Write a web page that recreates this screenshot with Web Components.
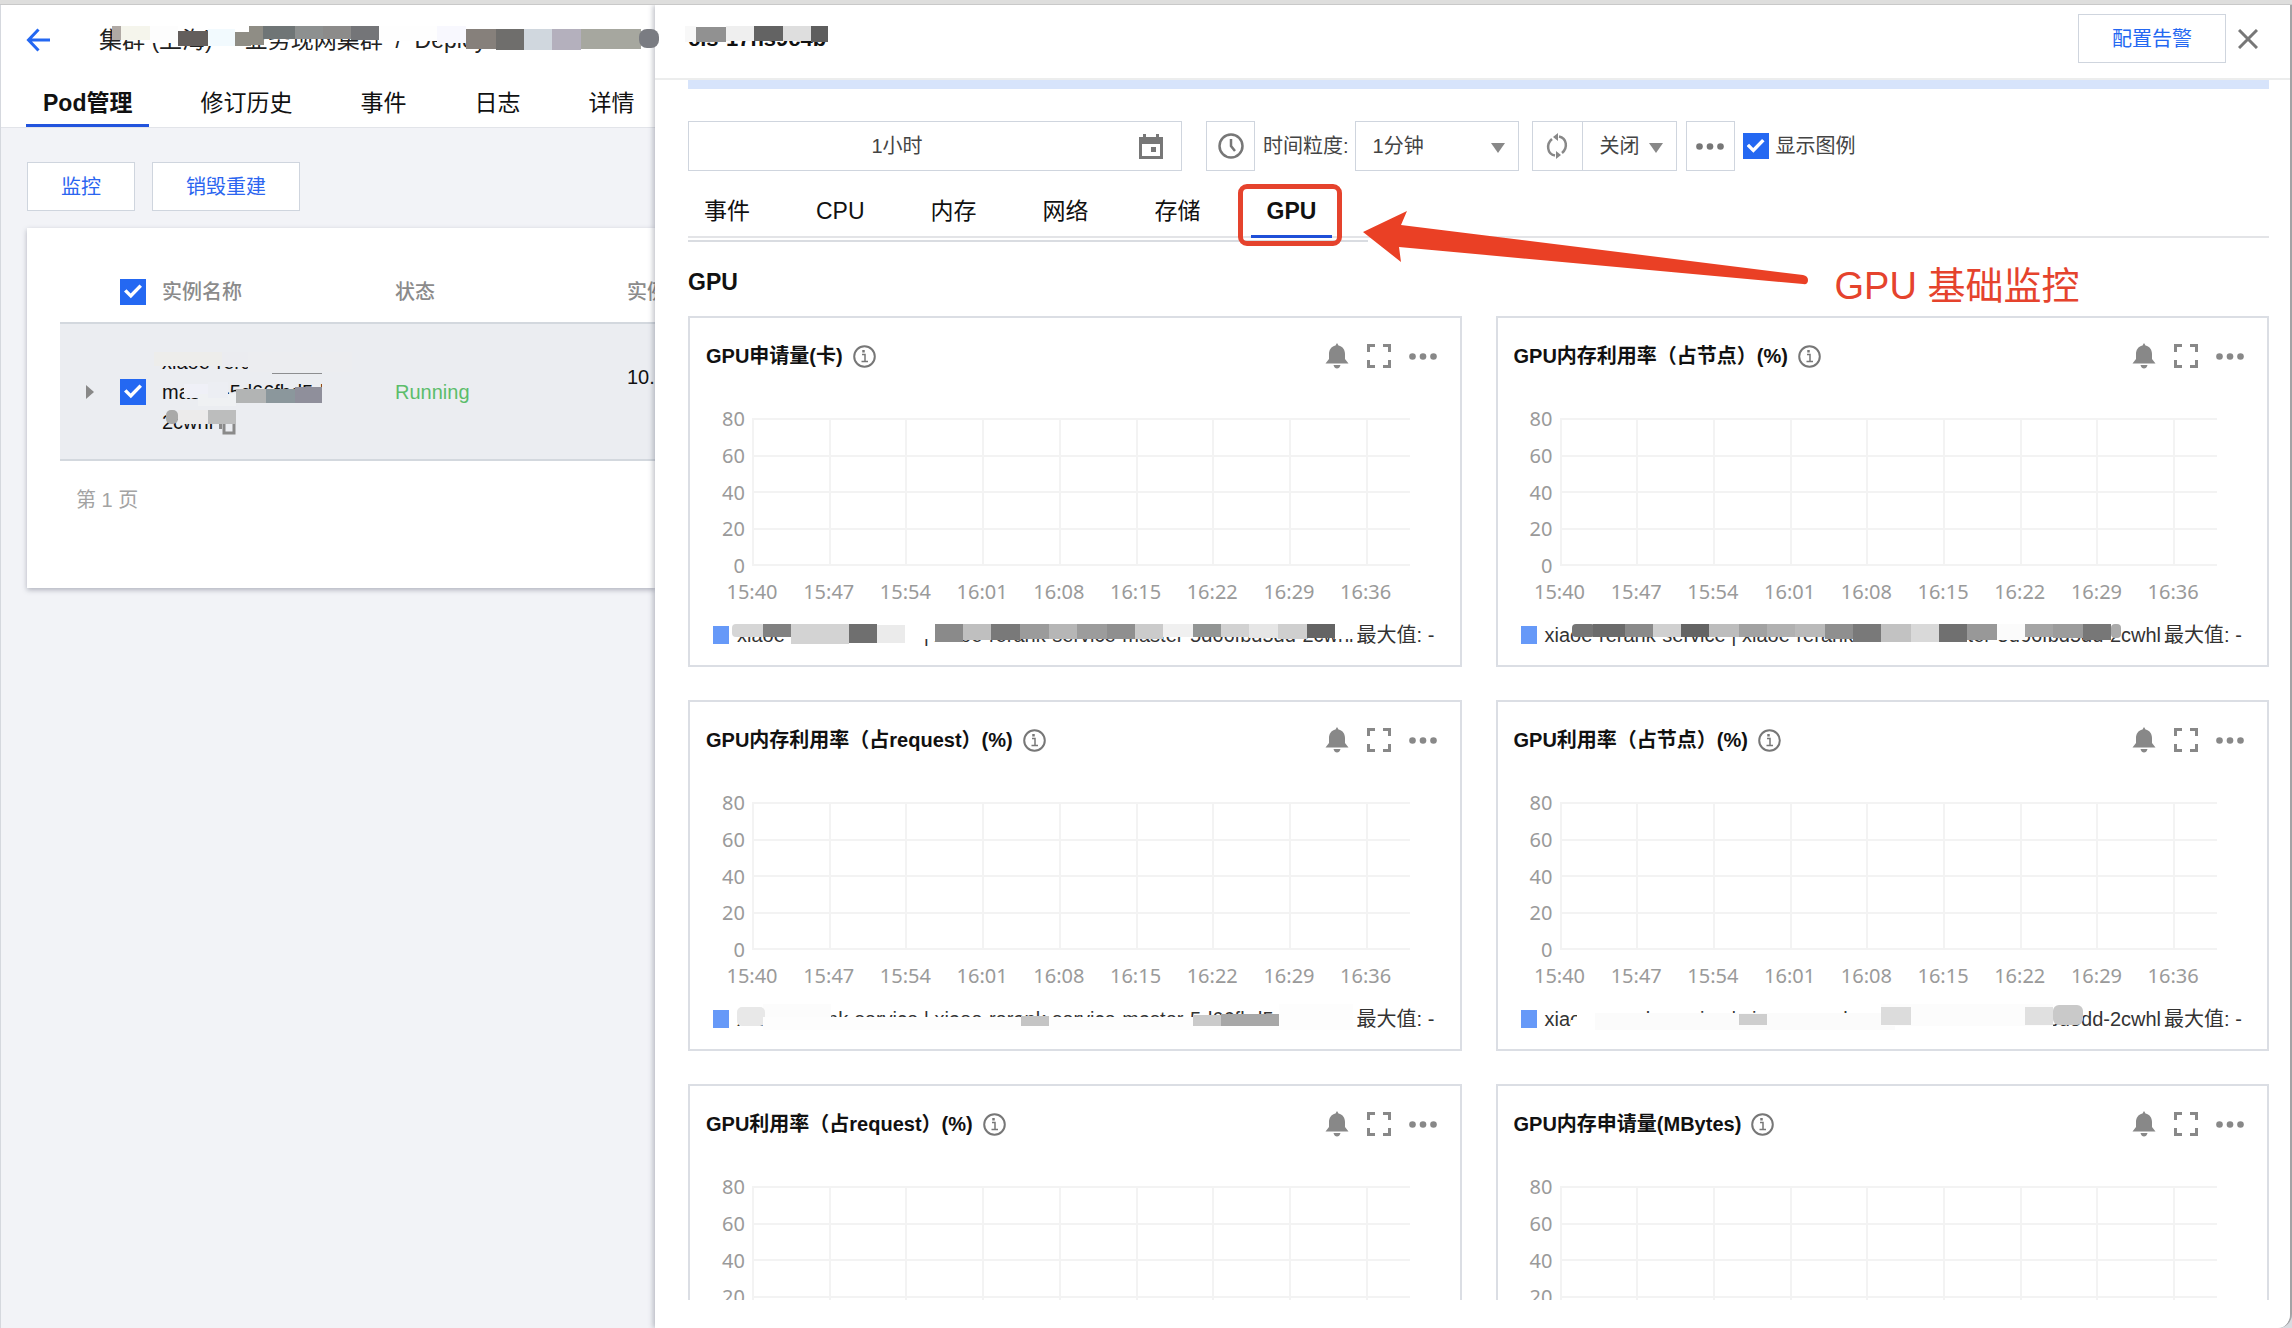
<!DOCTYPE html>
<html lang="zh-CN">
<head>
<meta charset="utf-8">
<title>Pod管理 - GPU 监控</title>
<style>
html,body{height:100%}
body{margin:0;background:#fff;color:#111;overflow:hidden;font:20px/30px "Liberation Sans","Noto Sans CJK SC",sans-serif}
</style>
</head>
<body>
<console-window>
  <workload-page slot="page"></workload-page>
  <monitor-drawer slot="drawer"></monitor-drawer>
</console-window>

<script>
const base = `
*{box-sizing:border-box}
button,input,select{font:inherit;color:inherit;margin:0;border-radius:0}
button{background:none;border:0;padding:0;cursor:pointer}
a{color:inherit;text-decoration:none}
svg{display:block}
.mask{position:absolute;left:0;top:0;width:1px;height:1px;overflow:visible;pointer-events:none}
.check{appearance:none;width:26px;height:26px;background:#2468f2;display:grid;place-items:center;flex:none}
.check::before{content:"";width:18px;height:16px;background:#fff;clip-path:polygon(0 50%,14% 36%,37% 62%,86% 6%,100% 20%,38% 92%)}
`;
function define(name, css, html, setup){
  customElements.define(name, class extends HTMLElement{
    connectedCallback(){
      if(this.shadowRoot) return;
      const root = this.attachShadow({mode:'open'});
      root.innerHTML = '<style>' + base + css + '</style>' + (typeof html === 'function' ? html(this) : html);
      if(setup) setup(root, this);
    }
  });
}
/* Redaction blocks: "left,top,right,bottom,colour" joined by spaces. */
function blocks(list){
  return '<svg class="mask" aria-hidden="true">' + list.trim().split(/\s+/).map(s => {
    const [l,t,r,b,c,q] = s.split(',');
    return `<rect x="${l}" y="${t}" width="${r-l}" height="${b-t}" fill="${c}" rx="${q||0}"/>`;
  }).join('') + '</svg>';
}

define('console-window', `
:host{display:flex;flex-direction:column;height:100vh;background:#d9dbe0}
.bar{height:5px;background:#dededd;border-bottom:1px solid #c9c9c9;flex:none}
.main{flex:1;min-height:0;display:grid;grid-template-columns:minmax(0,2fr) minmax(0,5fr);border-left:1px solid #d5d8de;border-right:2px solid #a3a3a5;border-radius:0 0 14px 0;overflow:hidden;background:#f2f3f7}
`, `<div class="bar"></div><div class="main"><slot name="page"></slot><slot name="drawer"></slot></div>`);

define('workload-page', `
:host{display:block;min-width:0}
header{background:#fff;border-bottom:1px solid #e2e4e9;height:123px;display:flex;flex-direction:column;justify-content:space-between;position:static}
.crumb{display:flex;align-items:center;gap:49px;padding:18px 0 0 25px;height:52px;font-size:23px;position:relative}
.crumb nav{white-space:pre;color:#222}
.crumb .mask{z-index:3}
.tabs{display:flex;gap:34px;padding-left:25px;font-size:23px;white-space:nowrap;overflow:hidden}
.tabs a{padding:0 17px;height:50px;line-height:52px;border-bottom:3px solid transparent}
.tabs a.on{font-weight:bold;border-color:#2254dd}
.body{padding:34px 0 40px 26px;overflow:hidden}
.acts{display:flex;gap:17px}
.acts button{height:49px;padding:0 33px;border:1px solid #cfd5de;background:#fff;color:#2b65f0}
.card{margin-top:17px;background:#fff;height:360px;padding:33px 0 0 33px;box-shadow:0 2px 5px rgba(54,58,80,.35);white-space:nowrap}
table{border-collapse:collapse;table-layout:fixed;width:900px}
th,td{padding:0;text-align:left;font-weight:normal}
th{height:62px;color:#8b8b8b;font-weight:500}
tr.sel td{height:137px;background:#ebedf1;border-top:2px solid #d3d8de;border-bottom:2px solid #d3d8de}
.tri{width:0;height:0;border:7px solid transparent;border-left:8px solid #888;border-right:0;margin-left:26px}
.name{position:relative}
.name svg.copy{display:inline-block;vertical-align:-6px}
.run{color:#5bbd6b}
.ip{line-height:30px}
.page{padding:24px 16px;color:#a3a3a3}
`, `
<header>
  <div class="crumb">
    <a href="#" aria-label="返回"><svg width="24" height="24" viewBox="0 0 24 24" fill="none" stroke="#2468f2" stroke-width="3"><path d="M24 12H3M12.500 1.500L2.500 12l10 10.500"/></svg></a>
    <nav>集群 (上海)     业务现网集群  /  Deployment:xiaoe</nav>
    ${blocks(`111,21,120,35,#b0a9a4 120,21,149,35,#f5f5ec 149,21,177,38,#fdfdfd 177,26,207,41,#635e5c 207,24,234,41,#f2fafe 234,27,250,41,#8f8d85 248,21,263,40,#8f8d85 262,21,294,34,#6f7576 294,21,322,34,#8d9090 322,21,350,34,#8c8b8a 350,21,378,35,#747578 378,21,436,36,#fefefe 436,21,465,38,#f8f8fe 465,24,495,44,#86807b 495,24,523,45,#6f6e6c 523,24,551,45,#d0d7de 551,24,580,45,#b4b0bd 580,24,640,44,#a6a79f 638,24,658,43,#7a7c82,8`)}
  </div>
  <div class="tabs"><a class="on" href="#">Pod管理</a><a href="#">修订历史</a><a href="#">事件</a><a href="#">日志</a><a href="#">详情</a></div>
</header>
<div class="body">
  <div class="acts"><button>监控</button><button>销毁重建</button></div>
  <div class="card">
    <table>
      <colgroup><col style="width:60px"><col style="width:42px"><col style="width:233px"><col style="width:232px"><col></colgroup>
      <thead><tr><th></th><th><input class="check" type="checkbox" checked aria-label="全选"></th><th>实例名称</th><th>状态</th><th>实例</th></tr></thead>
      <tbody><tr class="sel">
        <td><div class="tri"></div></td>
        <td><input class="check" type="checkbox" checked aria-label="选择实例"></td>
        <td class="name">xiaoe-rerank-service-<br>master-5d66fbd5dd-<br>2cwhl <svg class="copy" width="17" height="22" viewBox="0 0 17 22" fill="none" stroke="#8a8a8a" stroke-width="3"><path d="M1.500 16V2H10M5 7h10v13H5z"/></svg>
        ${blocks(`-8,28,60,42,#ededeb 60,28,86,43,#ebecf0 86,28,190,48,#ecedf0 110,49,160,50,#8d8e90 22,60,46,74,#eff0f7 36,70,74,82,#eff1f3 46,58,66,74,#eceef3 74,65,104,79,#b2b4b4 104,65,133,79,#8b979c 133,63,160,79,#8f8f9b 160,56,186,80,#ebedf1 4,86,16,100,#a9a9a8,5 16,86,46,100,#ecebeb 46,86,74,100,#bcbdbd`)}</td>
        <td class="run">Running</td>
        <td class="ip">10.<br>&nbsp;</td>
      </tr></tbody>
    </table>
    <div class="page">第 1 页</div>
  </div>
</div>`);

define('gpu-tabs', `
:host{display:block;margin-top:15px}
.row{display:flex;gap:34px;font-size:23px;border-bottom:2px solid #e3e4e7;height:52px;position:relative}
.row::after{content:"";position:absolute;left:0;top:54px;width:680px;height:2px;background:#d9dce1}
a{position:relative;padding:0 16px;line-height:51px;height:52px;border-bottom:3px solid transparent;white-space:nowrap}
a.on{font-weight:bold;border-color:#1f4fd8}
.ring{position:absolute;left:-13px;right:-10px;top:-2px;height:62px;border:5px solid #e5432d;border-radius:9px;z-index:2}
.arrow{position:absolute;left:112px;top:20px;z-index:2}
.note{position:absolute;left:584px;top:72px;font-size:38px;line-height:56px;font-weight:normal;color:#e5432d;z-index:2}
`, `
<div class="row"><a href="#">事件</a><a href="#">CPU</a><a href="#">内存</a><a href="#">网络</a><a href="#">存储</a>
<a class="on" href="#">GPU<span class="ring"></span>
<svg class="arrow" width="450" height="80" viewBox="0 0 450 80" fill="#ea4025"><path d="M0 26L44 5L38 19L440 69Q445 70 445 74Q445 79 440 78L36 41L38 56Z"/></svg>
<span class="note">GPU 基础监控</span></a></div>`);

define('monitor-drawer', `
:host{display:flex;flex-direction:column;min-width:0;min-height:0;background:#fff;position:relative;z-index:1;box-shadow:-2px 0 5px rgba(54,58,80,.3)}
header{height:75px;flex:none;display:flex;align-items:center;padding:0 32px 6px 33px;border-bottom:2px solid #eceded;position:relative}
h1{font-size:22px;line-height:30px;margin:0;flex:1}
header .alarm{width:148px;height:49px;border:1px solid #cfd5de;color:#2468f2;margin-right:12px}
.body{flex:1;min-height:0;overflow:hidden;margin:0 21px 28px 33px}
.banner{height:9px;background:#d7e4fb}
.tools{display:flex;align-items:center;margin-top:32px;height:50px;color:#444;white-space:nowrap}
.box{height:50px;border:1px solid #cfd5de;display:flex;align-items:center;justify-content:center;background:#fff}
.date{width:494px;margin-right:24px}
.date input{flex:1;min-width:0;border:0;text-align:center;padding:0 0 0 12px;outline:0}
.date button{margin:0 18px 0 46px}
.clock,.more{width:49px}
.clock{margin-right:8px}
.sel{position:relative;margin-left:6px;width:164px}
select{appearance:none;background:none;border:0;width:100%;height:100%;padding:0 17px;outline:0}
.caret{position:absolute;right:13px;top:21px;border:7px solid transparent;border-top:10px solid #888;border-bottom:0;pointer-events:none}
.group{display:flex;margin-left:13px;margin-right:9px}
.group .box{width:51px}
.group .sel{margin-left:-1px;width:95px}
.show{display:flex;align-items:center;gap:7px;margin-left:8px}
h2{font-size:23px;line-height:30px;margin:29px 0 19px}
.grid{display:grid;grid-template-columns:1fr 1fr;gap:33px 34px}
`, `
<header><h1>cls-17ns9c4b</h1><button class="alarm">配置告警</button>
<button aria-label="关闭"><svg width="20" height="20" viewBox="0 0 20 20" stroke="#777" stroke-width="3"><path d="M1 1L19 19M19 1L1 19"/></svg></button>
${blocks(`30,21,41,37,#f8f8f8 41,22,71,37,#919191 71,21,99,36,#efefef 99,21,128,36,#636363 128,21,156,36,#dedede 156,21,173,37,#5e5e5e`)}
</header>
<div class="body">
  <div class="banner"></div>
  <div class="tools">
    <div class="box date"><input type="text" value="1小时" readonly aria-label="时间范围"><button aria-label="选择日期"><svg width="24" height="25" viewBox="0 0 24 25"><path fill="#777" fill-rule="evenodd" d="M4 0h3v3h10V0h3v3h4v22H0V3h4zM3 10v12h18V10zM12 13h5v5h-5z"/></svg></button></div>
    <button class="box clock" aria-label="时间"><svg width="26" height="26" viewBox="0 0 26 26" fill="none" stroke="#777" stroke-width="2.500"><circle cx="13" cy="13" r="11.500"/><path d="M13 6v7l4 5"/></svg></button>
    <label for="gran">时间粒度:</label>
    <div class="box sel"><select id="gran"><option>1分钟</option></select><i class="caret"></i></div>
    <div class="group"><button class="box" aria-label="刷新"><svg width="22" height="26" viewBox="0 0 22 26" fill="none" stroke="#888" stroke-width="2.500"><path d="M9 22.500C1 21 0 11 6 6M13 3.500C21 5 22 15 16 20"/><path fill="#888" stroke="none" d="M12 0v8L7 4zM10 18v8l5-4z"/></svg></button>
    <div class="box sel"><select aria-label="自动刷新"><option>关闭</option></select><i class="caret"></i></div></div>
    <button class="box more" aria-label="更多"><svg width="28" height="7" viewBox="0 0 28 7" fill="#777"><circle cx="3.500" cy="3.500" r="3.300"/><circle cx="14" cy="3.500" r="3.300"/><circle cx="24.500" cy="3.500" r="3.300"/></svg></button>
    <label class="show"><input class="check" type="checkbox" checked>显示图例</label>
  </div>
  <gpu-tabs></gpu-tabs>
  <h2>GPU</h2>
  <div class="grid">
    <metric-card data-mask="a">GPU申请量(卡)</metric-card>
    <metric-card data-mask="b">GPU内存利用率（占节点）(%)</metric-card>
    <metric-card data-mask="c">GPU内存利用率（占request）(%)</metric-card>
    <metric-card data-mask="d">GPU利用率（占节点）(%)</metric-card>
    <metric-card>GPU利用率（占request）(%)</metric-card>
    <metric-card>GPU内存申请量(MBytes)</metric-card>
  </div>
</div>`);

/* Redactions over the series names, measured from the legend row. */
const masks = {
  a:`19,4,52,17,#d6d6d6,4 50,4,78,17,#818181 78,4,136,24,#d3d3d3 136,4,164,23,#6f6f6f 164,5,192,23,#ebebeb 192,0,208,26,#fff 208,0,222,19,#fff 222,4,250,22,#8a8a8a 250,4,278,20,#bfbfbf 278,4,307,20,#797979 307,4,336,19,#9b9b9b 336,4,364,19,#b6b6b6 364,4,394,19,#9c9c9c 394,4,422,19,#8f8f8f 422,4,450,19,#cbcbcb 450,4,480,17,#f0f0f0 480,4,508,17,#929594 508,4,536,17,#d2d2d2 536,4,565,18,#e6e6e6 565,4,594,19,#cfcfcf 594,4,622,18,#646464 622,0,640,19,#fff`,
  b:`51,4,74,17,#757575,4 72,4,104,17,#6b6b6b 104,4,132,17,#8a8a8a 132,4,160,17,#d0d0d0 160,4,188,17,#646464 188,4,218,17,#bdbdbd 218,4,246,17,#a2a2a2 246,4,274,17,#b1b1b1 274,4,304,17,#bababa 304,4,332,19,#8f8f8f 332,4,360,22,#797979 360,4,390,22,#c2c2c2 390,4,418,22,#d9d9d9 418,4,446,22,#707070 446,4,476,20,#989898 476,4,504,20,#fbfbfb 504,4,532,17,#a5a5a5 532,4,562,18,#9c9c9c 562,4,590,20,#777 590,4,600,18,#aaa,4`,
  c:`50,0,118,22,#fcfcfc 24,3,52,22,#e8e8e8,5 50,13,566,26,#fdfdfd 308,12,336,22,#c4c4c4 480,11,508,22,#cacaca 508,10,566,22,#a7a7a7 566,0,640,26,#fdfdfd`,
  d:`50,16,58,24,#fff 56,0,74,24,#fff 74,0,374,7,#fff 74,9,374,26,#fbfbfb 218,10,246,21,#cecece 360,0,532,22,#fcfcfc 360,3,390,21,#dcdcdc 504,3,532,21,#e0e0e0 532,1,562,21,#c9c9c9,6`
};
define('metric-card', `
:host{display:block;border:2px solid #dbdee4;height:351px;min-width:0}
.head{display:flex;align-items:center;height:36px;margin:20px 23px 0 16px;white-space:nowrap}
h3{font-size:20px;line-height:30px;margin:0 10px 0 0}
.sp{flex:1}
.acts{display:flex;align-items:center;gap:18px}
.chart{display:grid;grid-template-columns:55px 1fr;column-gap:7px;margin:44px 50px 0 0;font:20px/24px "Noto Sans",sans-serif;color:#9a9a9a}
.y{display:flex;flex-direction:column;justify-content:space-between;text-align:right;height:171px;margin:-11px 0 -13px}
.plot{display:grid;grid-template-rows:repeat(4,1fr);height:148px;border-bottom:2px solid #f3f3f3}
.plot div,.x{display:grid;grid-template-columns:repeat(8,7fr) 4fr}
.plot div{border-top:2px solid #f3f3f3}
.plot i{border-left:2px solid #f3f3f3}
.x{grid-column:2;margin-top:14px}
.x span{width:0;display:flex;justify-content:center}
.leg{position:relative;display:flex;align-items:center;margin:16px 26px 0 23px;height:30px;gap:8px;color:#333;white-space:nowrap}
.sw{width:16px;height:18px;background:#6699f8;flex:none}
.leg .name{flex:none}
.leg .name+.max{flex:none;margin-left:-5px}
`, el => `
<div class="head"><h3><slot></slot></h3>
<svg width="23" height="23" viewBox="0 0 23 23" fill="none" stroke="#777" stroke-width="2"><circle cx="11.500" cy="11.500" r="10.300"/><path stroke-width="1.500" d="M9 9.500h3v7M8.500 16.500h6.500"/><path stroke-width="2.500" d="M10.500 5v2.500"/></svg>
<span class="sp"></span>
<div class="acts">
<button aria-label="告警"><svg width="24" height="26" viewBox="0 0 24 26" fill="#888"><path d="M12 0l1.500 2.500C18 3.500 20 7 20 11v5l3.500 4.500H.5L4 16v-5c0-4 2-7.500 6.500-8.500zM8.500 22h7c-.5 2.500-2 3.500-3.500 3.500S9 24.500 8.500 22z"/></svg></button>
<button aria-label="全屏"><svg width="24" height="24" viewBox="0 0 24 24" fill="none" stroke="#888" stroke-width="3"><path d="M1.500 8V1.500H8M16 1.500h6.500V8M22.500 16v6.500H16M8 22.500H1.500V16"/></svg></button>
<button aria-label="更多"><svg width="28" height="7" viewBox="0 0 28 7" fill="#888"><circle cx="3.500" cy="3.500" r="3.300"/><circle cx="14" cy="3.500" r="3.300"/><circle cx="24.500" cy="3.500" r="3.300"/></svg></button>
</div></div>
<div class="chart">
<div class="y">${[80,60,40,20,0].map(v=>`<span>${v}</span>`).join('')}</div>
<div class="plot">${('<div>'+'<i></i>'.repeat(9)+'</div>').repeat(4)}</div>
<div class="x">${['15:40','15:47','15:54','16:01','16:08','16:15','16:22','16:29','16:36'].map(v=>`<span>${v}</span>`).join('')}</div>
</div>
<div class="leg"><i class="sw"></i><span class="name">xiaoe-rerank-service | xiaoe-rerank-service-master-5d66fbd5dd-2cwhl</span><span class="max">最大值: -</span>
${el.dataset.mask ? blocks(masks[el.dataset.mask]) : ''}</div>`);
</script>
</body>
</html>
